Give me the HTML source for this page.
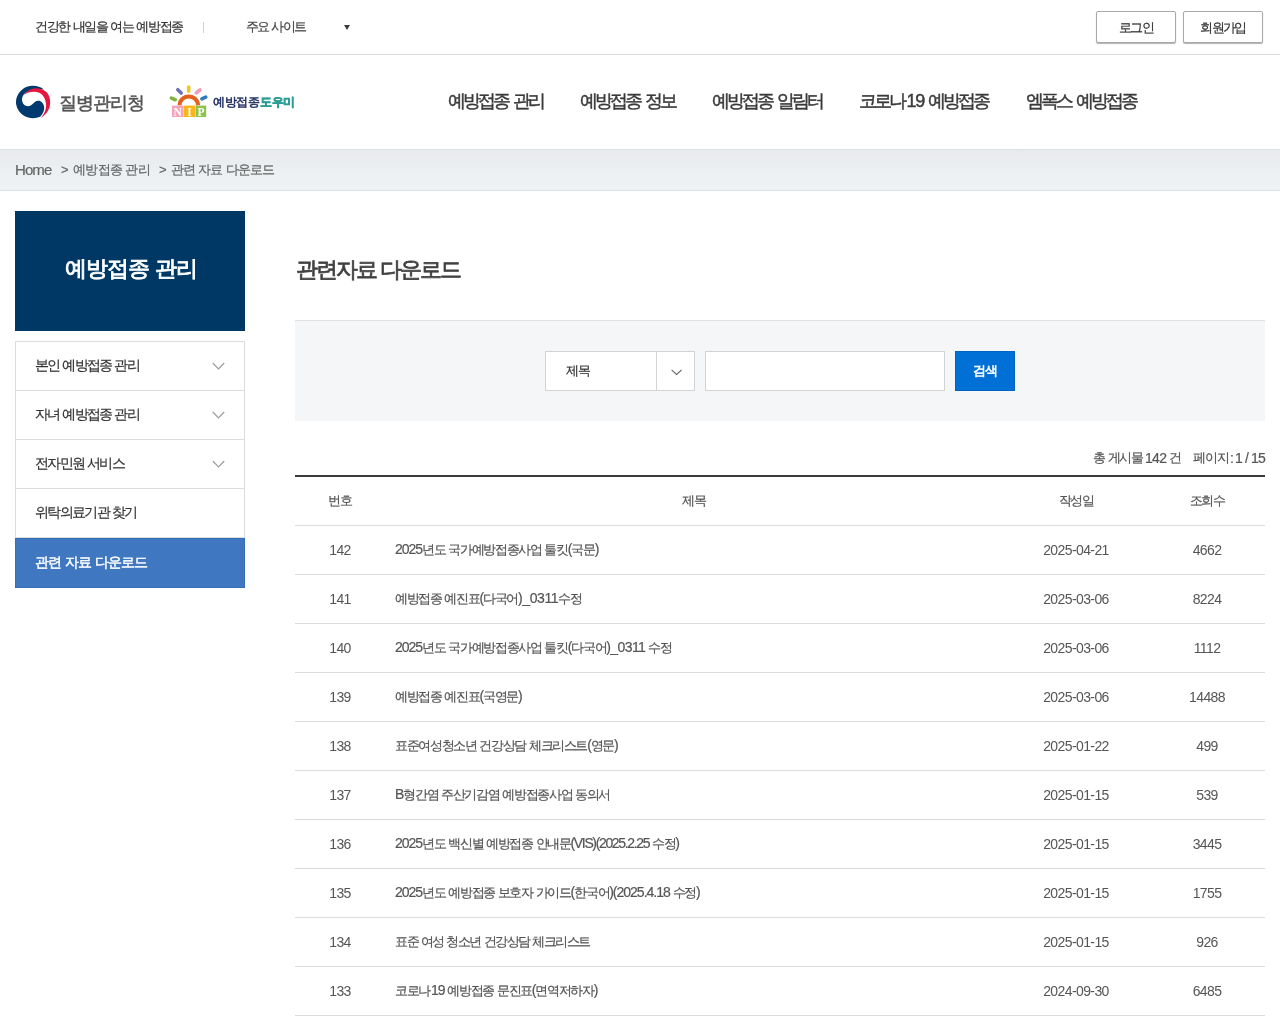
<!DOCTYPE html>
<html lang="ko">
<head>
<meta charset="utf-8">
<title>관련 자료 다운로드</title>
<style>
*{box-sizing:border-box;margin:0;padding:0}
html,body{width:1280px;height:1024px;overflow:hidden;background:#fff}
body{font-family:"Liberation Sans",sans-serif;color:#444;font-size:14px;position:relative;word-spacing:.6px;-webkit-text-stroke:.2px;will-change:transform}
a{color:inherit;text-decoration:none}
ul{list-style:none}
i{font-style:normal}
.n{font-size:14px;letter-spacing:-1px}
/* top bar */
#top{position:absolute;left:0;top:0;width:1280px;height:55px;border-bottom:1px solid #dadada;background:#fff}
#top .slogan{position:absolute;left:35px;top:17px;font-size:13px;line-height:20px;color:#333;letter-spacing:-1.38px;white-space:nowrap}
#top .dv{position:absolute;left:203px;top:22px;width:1px;height:11px;background:#d0d0d0}
#top .site{position:absolute;left:246px;top:17px;font-size:13px;line-height:20px;color:#444;letter-spacing:-1.6px;white-space:nowrap}
#top .tri{position:absolute;left:344px;top:25px;width:0;height:0;border-left:3.5px solid transparent;border-right:3.5px solid transparent;border-top:5.5px solid #3c3c3c}
.tbtn{position:absolute;top:11px;height:32px;border:1px solid #a9a9a9;border-radius:2px;background:#fff;box-shadow:0 1px 1px rgba(0,0,0,.3);font-size:13px;line-height:31px;text-align:center;color:#333;letter-spacing:-1.6px;white-space:nowrap;-webkit-text-stroke:.2px #333}
/* header */
#hdr{position:absolute;left:0;top:55px;width:1280px;height:95px;background:#fff}
#kdca{position:absolute;left:59px;top:36px;font-size:18px;line-height:24px;color:#555;letter-spacing:-.9px;white-space:nowrap;-webkit-text-stroke:.5px #555}
#nipt{position:absolute;left:213px;top:38px;font-size:12px;line-height:18px;font-weight:400;color:#1c2a5e;letter-spacing:-.3px;white-space:nowrap;-webkit-text-stroke:.5px}
#nipt b{color:#2a9d94}
#gnb a{position:absolute;top:33px;font-size:18px;line-height:26px;color:#3a3a3a;letter-spacing:-2.85px;word-spacing:2px;white-space:nowrap;-webkit-text-stroke:.45px #3a3a3a}
#gnb .n{font-size:18px;letter-spacing:-1.3px}
/* breadcrumb */
#crumb{position:absolute;left:0;top:149px;width:1280px;height:42px;background:linear-gradient(#e9eaec,#ecf0f3 55%,#eef2f5);border-top:1px solid #dde1e4;border-bottom:1px solid #dde1e4;font-size:13px;color:#666;letter-spacing:-.75px}
#crumb span{position:absolute;top:10px;line-height:20px;white-space:nowrap}
#crumb .h{font-size:15px;letter-spacing:-.9px}
#crumb .g{font-size:13px;letter-spacing:0}
/* sidebar */
#lnbT{position:absolute;left:15px;top:211px;width:230px;height:120px;background:#003865;color:#fff;font-size:22px;text-align:center;line-height:116px;padding-left:2px;letter-spacing:-.9px;white-space:nowrap;-webkit-text-stroke:.9px #fff}
#lnb{position:absolute;left:15px;top:341px;width:230px}
#lnb li{position:relative;height:49px;border:1px solid #dcdcdc;border-bottom:none;padding-left:19px;line-height:46px;font-size:14px;color:#333;background:#fff;white-space:nowrap;letter-spacing:-1.7px}
#lnb li.on{height:50px;margin-top:0;padding-left:19px;background:#3f78c1;border:1px solid #356db6;color:#fff;font-size:14px;line-height:47px;letter-spacing:-.9px;-webkit-text-stroke:.45px #fff}
#lnb li svg{position:absolute;left:196px;top:20px}
#lnb li.b4{height:50px;border-bottom:1px solid #dcdcdc}
/* content */
#tit{position:absolute;left:296px;top:253px;font-size:22px;line-height:34px;font-weight:400;color:#404040;letter-spacing:-2.05px;white-space:nowrap;-webkit-text-stroke:.75px #404040}
#sch{position:absolute;left:295px;top:320px;width:970px;height:101px;background:#f4f6f8;border-top:1px solid #e0e0e0}
#sch .sel{position:absolute;left:250px;top:30px;width:150px;height:40px;border:1px solid #d3d3d3;background:#fff;font-size:13px;line-height:37px;padding-left:20px;color:#333;letter-spacing:-1.12px}
#sch .sel i{position:absolute;left:110px;top:0;width:1px;height:38px;background:#d3d3d3}
#sch .sel svg{position:absolute;left:125px;top:17px}
#sch .inp{position:absolute;left:410px;top:30px;width:240px;height:40px;border:1px solid #d3d3d3;background:#fff}
#sch .btn{position:absolute;left:660px;top:30px;width:60px;height:40px;background:#0070d7;border:1px solid #0064c4;color:#fff;font-size:13px;line-height:37px;text-align:center;letter-spacing:-1.12px;-webkit-text-stroke:.55px #fff}
#cnt{position:absolute;left:0;top:448px;width:1280px;height:20px;font-size:13px;line-height:20px;color:#555;letter-spacing:-1.25px;white-space:nowrap}
#cnt span{position:absolute;top:0}
#cnt .n{letter-spacing:-.7px}
#tbl{position:absolute;left:295px;top:475px;width:970px;border-top:2px solid #3a3a3a;border-collapse:collapse;table-layout:fixed;font-size:13px;color:#555;letter-spacing:-1.35px}
#tbl th{height:49px;font-weight:400;color:#555;border-bottom:1px solid #dcdcdc;text-align:center;padding:0}
#tbl td{height:49px;border-bottom:1px solid #dcdcdc;text-align:center;white-space:nowrap;overflow:hidden;padding:0}
#tbl td.l{text-align:left;padding-left:10px}
#tbl td.d{letter-spacing:-.6px;font-size:14px;-webkit-text-stroke:0}
</style>
</head>
<body>
<div id="top">
  <span class="slogan">건강한 내일을 여는 예방접종</span>
  <i class="dv"></i>
  <span class="site">주요 사이트</span>
  <i class="tri"></i>
  <a class="tbtn" style="left:1096px;width:80px">로그인</a>
  <a class="tbtn" style="left:1183px;width:80px">회원가입</a>
</div>
<div id="hdr">
  <svg style="position:absolute;left:10px;top:25px" width="48" height="44" viewBox="0 0 1117 1024">
    <path fill="#003a6e" d="M790 222A397 378 0 1 0 700 857C770 790 805 710 795 630C785 540 720 475 645 482C580 488 545 555 490 590C430 628 345 610 305 545C265 480 270 400 320 335C400 250 520 205 620 208C690 208 750 212 790 222Z"/>
    <path fill="#e5173f" d="M325 345C390 250 500 190 600 190C700 190 800 222 860 292C915 350 940 450 935 540C930 700 830 810 715 885C790 800 850 690 838 560C830 440 770 340 680 295C580 255 430 265 325 345Z"/>
  </svg>
  <span id="kdca">질병관리청</span>
  <svg style="position:absolute;left:166px;top:25px" width="48" height="44" viewBox="0 0 48 44">
    <rect x="6" y="25.6" width="11.4" height="11.4" fill="#f2a3b9"/>
    <rect x="17.8" y="25.6" width="11.4" height="11.4" fill="#fab617"/>
    <rect x="29.6" y="25.6" width="10.6" height="11.4" fill="#8cc34e"/>
    <path d="M13.6 25.2A9.2 8.7 0 0 1 32 25.2" fill="none" stroke="#e2611d" stroke-width="4"/>
    <rect x="20.9" y="5.2" width="3.6" height="7.8" rx="1.8" fill="#efc71e"/>
    <rect x="11.7" y="7.2" width="3.6" height="8.4" rx="1.8" fill="#7070b6" transform="rotate(-45 13.5 11.4)"/>
    <rect x="30.4" y="7.2" width="3.6" height="8.4" rx="1.8" fill="#f09ab6" transform="rotate(50 32.2 11.4)"/>
    <rect x="5.5" y="15" width="3.6" height="7.8" rx="1.8" fill="#80b63a" transform="rotate(-66 7.3 18.9)"/>
    <rect x="36" y="14.1" width="3.6" height="7.8" rx="1.8" fill="#2e7cbe" transform="rotate(67 37.8 18)"/>
    <g fill="#fff" font-family="'Liberation Serif',serif" font-weight="700" font-size="11.5" text-anchor="middle">
      <text x="11.7" y="35.6">N</text><text x="23.5" y="35.6">I</text><text x="35" y="35.6">P</text>
    </g>
  </svg>
  <span id="nipt">예방접종<b>도우미</b></span>
  <div id="gnb">
    <a style="left:448px">예방접종 관리</a>
    <a style="left:580px">예방접종 정보</a>
    <a style="left:712px">예방접종 알림터</a>
    <a style="left:859px">코로나<span class="n" style="margin-left:2px">19</span> 예방접종</a>
    <a style="left:1026px">엠폭스 예방접종</a>
  </div>
</div>
<div id="crumb">
  <span class="h" style="left:15px">Home</span>
  <span class="g" style="left:61px">&gt;</span>
  <span style="left:73px">예방접종 관리</span>
  <span class="g" style="left:159px">&gt;</span>
  <span style="left:171px;letter-spacing:-.95px">관련 자료 다운로드</span>
</div>
<div id="lnbT">예방접종 관리</div>
<ul id="lnb">
  <li>본인 예방접종 관리<svg width="14" height="9" viewBox="0 0 14 9"><path d="M.8 1l5.7 6L12.2 1" fill="none" stroke="#9c9c9c" stroke-width="1.15"/></svg></li>
  <li>자녀 예방접종 관리<svg width="14" height="9" viewBox="0 0 14 9"><path d="M.8 1l5.7 6L12.2 1" fill="none" stroke="#9c9c9c" stroke-width="1.15"/></svg></li>
  <li>전자민원 서비스<svg width="14" height="9" viewBox="0 0 14 9"><path d="M.8 1l5.7 6L12.2 1" fill="none" stroke="#9c9c9c" stroke-width="1.15"/></svg></li>
  <li class="b4">위탁의료기관 찾기</li>
  <li class="on">관련 자료 다운로드</li>
</ul>
<h2 id="tit">관련자료 다운로드</h2>
<div id="sch">
  <div class="sel">제목<i></i><svg width="12" height="7" viewBox="0 0 12 7"><path d="M.6.8l5 4.6L10.6.8" fill="none" stroke="#666" stroke-width="1.15"/></svg></div>
  <div class="inp"></div>
  <div class="btn">검색</div>
</div>
<div id="cnt"><span style="left:1093px">총 게시물</span><span class="n" style="left:1145px">142</span><span style="left:1169px">건</span><span style="left:1193px">페이지</span><span class="n" style="left:1230px">:</span><span class="n" style="left:1235px">1</span><span class="n" style="left:1245px">/</span><span class="n" style="left:1251px">15</span></div>
<table id="tbl">
  <colgroup><col style="width:90px"><col><col style="width:146px"><col style="width:116px"></colgroup>
  <tr><th>번호</th><th>제목</th><th>작성일</th><th>조회수</th></tr>
  <tr><td class="d">142</td><td class="l"><span class="n">2025</span>년도 국가예방접종사업 툴킷<span class="n">(</span>국문<span class="n">)</span></td><td class="d">2025-04-21</td><td class="d">4662</td></tr>
  <tr><td class="d">141</td><td class="l">예방접종 예진표<span class="n">(</span>다국어<span class="n" style="letter-spacing:-.4px">)_0311</span>수정</td><td class="d">2025-03-06</td><td class="d">8224</td></tr>
  <tr><td class="d">140</td><td class="l"><span class="n">2025</span>년도 국가예방접종사업 툴킷<span class="n">(</span>다국어<span class="n" style="letter-spacing:-.6px">)_0311</span> 수정</td><td class="d">2025-03-06</td><td class="d">1112</td></tr>
  <tr><td class="d">139</td><td class="l">예방접종 예진표<span class="n">(</span>국영문<span class="n">)</span></td><td class="d">2025-03-06</td><td class="d">14488</td></tr>
  <tr><td class="d">138</td><td class="l">표준여성청소년 건강상담 체크리스트<span class="n">(</span>영문<span class="n">)</span></td><td class="d">2025-01-22</td><td class="d">499</td></tr>
  <tr><td class="d">137</td><td class="l"><span class="n">B</span>형간염 주산기감염 예방접종사업 동의서</td><td class="d">2025-01-15</td><td class="d">539</td></tr>
  <tr><td class="d">136</td><td class="l"><span class="n">2025</span>년도 백신별 예방접종 안내문<span class="n" style="letter-spacing:-1.35px">(VIS)(2025.2.25</span> 수정<span class="n">)</span></td><td class="d">2025-01-15</td><td class="d">3445</td></tr>
  <tr><td class="d">135</td><td class="l"><span class="n">2025</span>년도 예방접종 보호자 가이드<span class="n">(</span>한국어<span class="n">)(2025.4.18</span> 수정<span class="n">)</span></td><td class="d">2025-01-15</td><td class="d">1755</td></tr>
  <tr><td class="d">134</td><td class="l" style="letter-spacing:-1.5px">표준 여성 청소년 건강상담 체크리스트</td><td class="d">2025-01-15</td><td class="d">926</td></tr>
  <tr><td class="d">133</td><td class="l">코로나<span class="n" style="margin-left:1px">19</span> 예방접종 문진표<span class="n">(</span>면역저하자<span class="n">)</span></td><td class="d">2024-09-30</td><td class="d">6485</td></tr>
  <tr><td class="d">132</td><td class="l">코로나<span class="n" style="margin-left:1px">19</span> 예방접종 문진표</td><td class="d">2024-09-30</td><td class="d">9112</td></tr>
</table>
</body>
</html>
